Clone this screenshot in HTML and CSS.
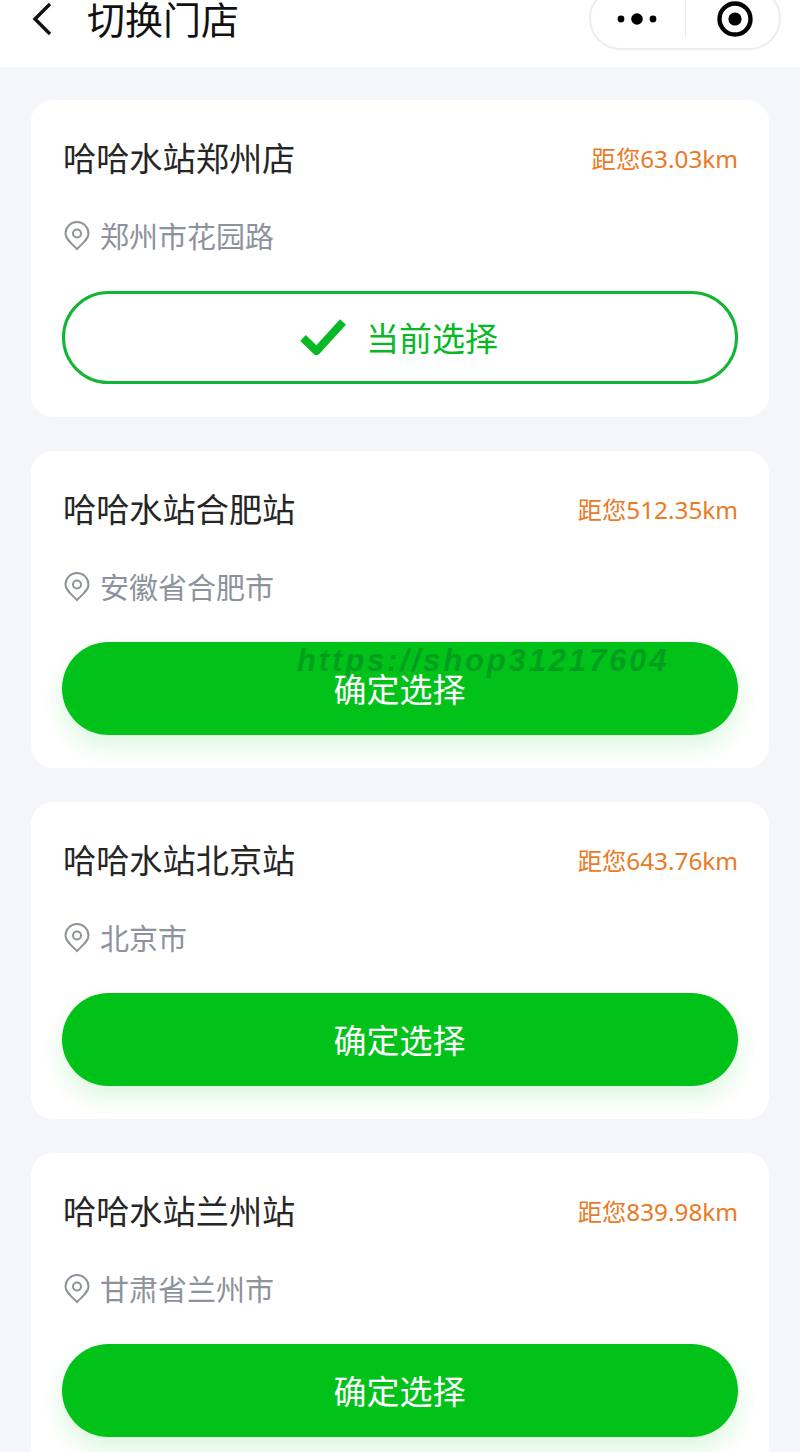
FILE: index.html
```html
<!DOCTYPE html>
<html lang="zh-CN">
<head>
  <meta charset="UTF-8" />
  <title>切换门店</title>
  <link rel="stylesheet" href="styles.css">
</head>
<body>
  <header class="nav">
    <svg class="back" width="24" height="36" viewBox="0 0 24 36"><path d="M19 3 4 18l15 15" fill="none" stroke="#111" stroke-width="3.4"/></svg>
    <h1 class="nav-title">切换门店</h1>
    <div class="capsule">
      <svg class="capsule-dots" width="40" height="14" viewBox="0 0 40 14"><circle cx="4" cy="7" r="3.4"/><circle cx="20" cy="7" r="5.8"/><circle cx="36" cy="7" r="3.4"/></svg>
      <span class="capsule-line"></span>
      <svg class="capsule-dot" width="36" height="36" viewBox="0 0 36 36"><circle cx="18" cy="18" r="15.5" fill="none" stroke="#000" stroke-width="4.4"/><circle cx="18" cy="18" r="6.6"/></svg>
    </div>
  </header>

  <main class="list">
    <section class="card">
      <div class="card-top">
        <h2 class="name">哈哈水站郑州店</h2>
        <span class="distance">距您63.03km</span>
      </div>
      <p class="address">
        <svg class="pin" width="26" height="30" viewBox="0 0 26 30"><path d="M13 28C7 22 1.500 18 1.500 12.500a11.500 11.500 0 0 1 23 0C24.500 18 19 22 13 28Z" fill="none" stroke="#8d929c" stroke-width="2"/><circle cx="13" cy="12.500" r="4" fill="none" stroke="#8d929c" stroke-width="2"/></svg>
        郑州市花园路
      </p>
      <button class="btn btn-current">
        <svg class="check" width="46" height="38" viewBox="0 0 46 38"><path d="M3 19 16.500 32 43 3" fill="none" stroke="#06b925" stroke-width="8" stroke-linejoin="round"/></svg>
        <span class="btn-text">当前选择</span>
      </button>
    </section>

    <section class="card">
      <div class="card-top">
        <h2 class="name">哈哈水站合肥站</h2>
        <span class="distance">距您512.35km</span>
      </div>
      <p class="address">
        <svg class="pin" width="26" height="30" viewBox="0 0 26 30"><path d="M13 28C7 22 1.500 18 1.500 12.500a11.500 11.500 0 0 1 23 0C24.500 18 19 22 13 28Z" fill="none" stroke="#8d929c" stroke-width="2"/><circle cx="13" cy="12.500" r="4" fill="none" stroke="#8d929c" stroke-width="2"/></svg>
        安徽省合肥市
      </p>
      <button class="btn btn-pick"><span class="btn-text">确定选择</span></button>
    </section>

    <section class="card">
      <div class="card-top">
        <h2 class="name">哈哈水站北京站</h2>
        <span class="distance">距您643.76km</span>
      </div>
      <p class="address">
        <svg class="pin" width="26" height="30" viewBox="0 0 26 30"><path d="M13 28C7 22 1.500 18 1.500 12.500a11.500 11.500 0 0 1 23 0C24.500 18 19 22 13 28Z" fill="none" stroke="#8d929c" stroke-width="2"/><circle cx="13" cy="12.500" r="4" fill="none" stroke="#8d929c" stroke-width="2"/></svg>
        北京市
      </p>
      <button class="btn btn-pick"><span class="btn-text">确定选择</span></button>
    </section>

    <section class="card">
      <div class="card-top">
        <h2 class="name">哈哈水站兰州站</h2>
        <span class="distance">距您839.98km</span>
      </div>
      <p class="address">
        <svg class="pin" width="26" height="30" viewBox="0 0 26 30"><path d="M13 28C7 22 1.500 18 1.500 12.500a11.500 11.500 0 0 1 23 0C24.500 18 19 22 13 28Z" fill="none" stroke="#8d929c" stroke-width="2"/><circle cx="13" cy="12.500" r="4" fill="none" stroke="#8d929c" stroke-width="2"/></svg>
        甘肃省兰州市
      </p>
      <button class="btn btn-pick"><span class="btn-text">确定选择</span></button>
    </section>
  </main>

  <div class="watermark">https://shop31217604</div>
</body>
</html>
```

FILE: styles.css
```css
* {
  box-sizing: border-box;
}

html, body {
  height: 1452px;
  overflow: hidden;
}

body {
  margin: 0;
  position: relative;
  background: #f4f6f9;
  font-family: "Noto Sans", "Noto Sans CJK SC", sans-serif;
  color: #222;
}

.nav {
  display: flex;
  align-items: flex-start;
  height: 67px;
  background: #fff;
  overflow: hidden;
}

.back {
  flex: none;
  margin: 1px 0 0 31px;
}

.nav-title {
  flex: 1;
  margin: 0 0 0 32px;
  font-size: 38px;
  line-height: 38px;
  font-weight: 400;
  color: #111;
}

.capsule {
  flex: none;
  display: flex;
  align-items: center;
  width: 192px;
  height: 63px;
  margin: -13px 19px 0 0;
  background: #fff;
  border: 2px solid #eeeeee;
  border-radius: 32px;
}

.capsule-dots {
  margin-left: 26px;
}

.capsule-line {
  width: 1px;
  height: 38px;
  margin: 0 31px 0 28px;
  background: #ececec;
}

.list {
  display: flex;
  flex-direction: column;
  gap: 34px;
  padding: 33px 31px 0;
}

.card {
  flex: none;
  height: 317px;
  padding: 34px 31px 0;
  background: #fff;
  border-radius: 22px;
}

.card-top {
  display: flex;
  align-items: center;
  justify-content: space-between;
  padding-left: 1px;
  height: 50px;
}

.name {
  margin: 0;
  font-size: 33.200px;
  line-height: 50px;
  font-weight: 400;
  color: #262626;
}

.distance {
  margin-top: -4px;
  font-size: 24.300px;
  color: #e97a26;
}

.address {
  display: flex;
  align-items: center;
  gap: 10px;
  height: 44px;
  margin: 29px 0 0;
  padding-left: 2px;
  font-size: 29px;
  color: #8d929c;
}

.pin {
  flex: none;
  margin-top: 2px;
}

.btn {
  display: flex;
  align-items: center;
  justify-content: center;
  width: 100%;
  height: 93px;
  margin-top: 34px;
  border-radius: 47px;
  font-family: inherit;
  font-size: 33px;
}

.btn-text {
  margin: -2px 1px 0 0;
}

.btn-current {
  gap: 20px;
  background: #fff;
  border: 3px solid #12b535;
  color: #06b925;
}

.btn-current .check {
  margin-left: -1px;
}

.btn-pick {
  background: #01c219;
  border: none;
  color: #fff;
  box-shadow: 0 12px 24px rgba(3, 195, 26, 0.14);
}

.watermark {
  position: absolute;
  left: 297px;
  top: 642px;
  font-family: "Liberation Sans", sans-serif;
  font-size: 31px;
  line-height: 38px;
  font-weight: 700;
  font-style: italic;
  letter-spacing: 2.850px;
  color: rgba(0, 110, 40, 0.45);
  white-space: nowrap;
}
```
